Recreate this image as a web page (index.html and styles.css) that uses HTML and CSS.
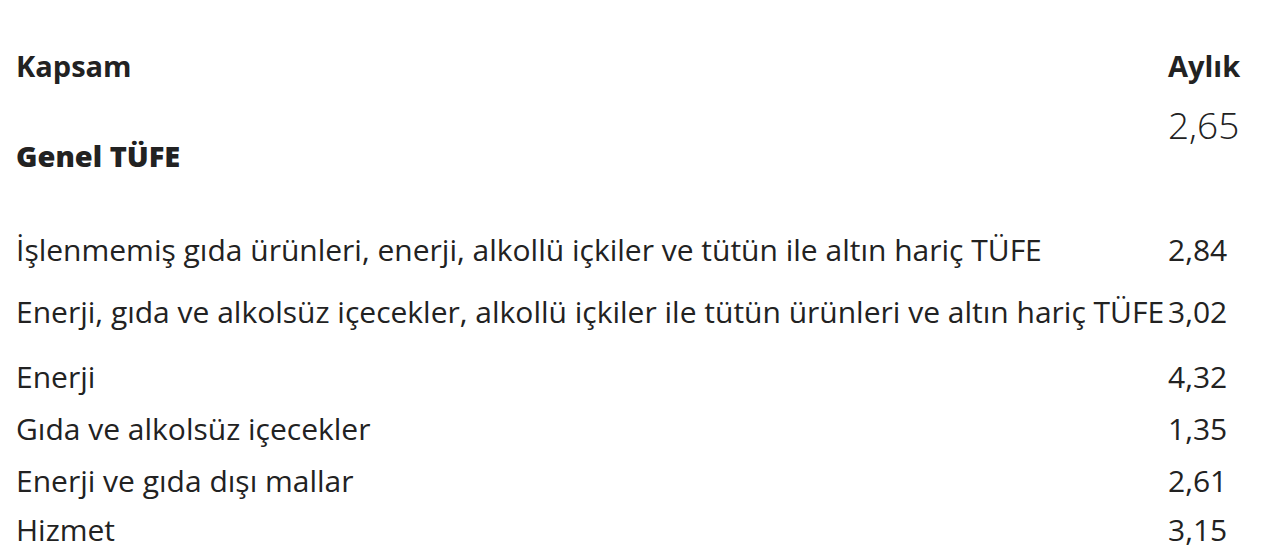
FILE: index.html
```html
<!DOCTYPE html>
<html lang="tr">
<head>
<meta charset="utf-8">
<title>TÜFE</title>
<link rel="stylesheet" href="styles.css">
</head>
<body>
<div class="table">
  <div class="row head">
    <div class="cell label">Kapsam</div>
    <div class="cell value">Aylık</div>
  </div>
  <div class="row genel">
    <div class="cell label"><strong>Genel TÜFE</strong></div>
    <div class="cell value big">2,65</div>
  </div>
  <div class="row r1">
    <div class="cell label">İşlenmemiş gıda ürünleri, enerji, alkollü içkiler ve tütün ile altın hariç TÜFE</div>
    <div class="cell value">2,84</div>
  </div>
  <div class="row r2">
    <div class="cell label">Enerji, gıda ve alkolsüz içecekler, alkollü içkiler ile tütün ürünleri ve altın hariç TÜFE</div>
    <div class="cell value">3,02</div>
  </div>
  <div class="row">
    <div class="cell label">Enerji</div>
    <div class="cell value">4,32</div>
  </div>
  <div class="row">
    <div class="cell label">Gıda ve alkolsüz içecekler</div>
    <div class="cell value">1,35</div>
  </div>
  <div class="row r7">
    <div class="cell label">Enerji ve gıda dışı mallar</div>
    <div class="cell value">2,61</div>
  </div>
  <div class="row last">
    <div class="cell label">Hizmet</div>
    <div class="cell value">3,15</div>
  </div>
</div>
</body>
</html>
```
FILE: styles.css
```css
html, body {
  margin: 0;
  background: #fff;
}
body {
  font-family: "Open Sans", "Noto Sans", sans-serif;
  font-size: 30px;
  color: #222;
  overflow: hidden;
}
.table {
  padding: 45px 0 0 16px;
}
.row {
  display: grid;
  grid-template-columns: 1152px 1fr;
  height: 52px;
  line-height: 41px;
  white-space: nowrap;
}
.head {
  height: 55px;
  font-size: 29px;
  font-weight: 700;
}
.genel {
  height: 129px;
}
.genel .label {
  padding-top: 35px;
  font-size: 29px;
  font-weight: 700;
}
.genel .big {
  font-size: 37px;
  font-weight: 300;
  line-height: 50px;
}
.r1 { height: 62px; }
.r2 { height: 65px; }
.r7 { height: 51px; }
.last {
  height: 37px;
  line-height: 37px;
}
```
